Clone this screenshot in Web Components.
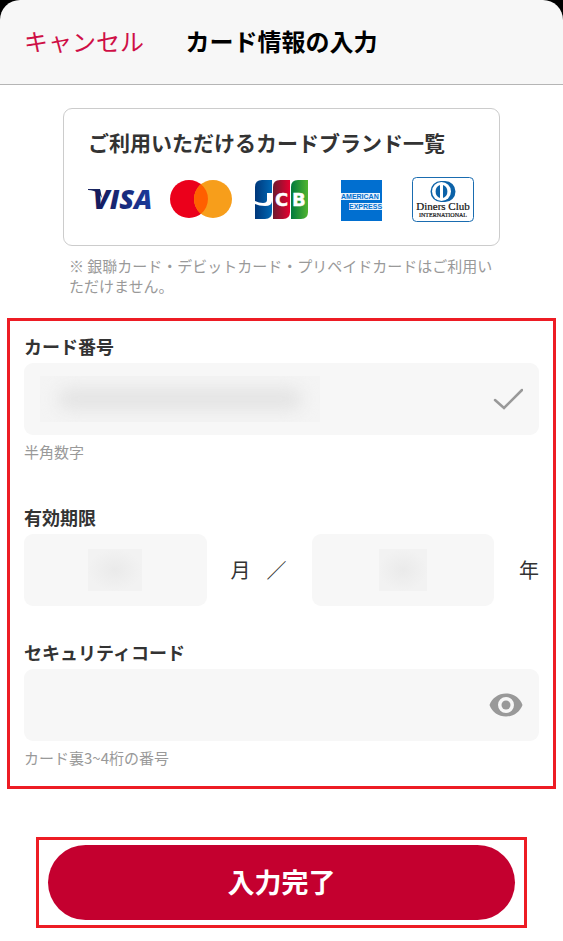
<!DOCTYPE html>
<html lang="ja">
<head>
<meta charset="utf-8">
<meta name="viewport" content="width=device-width, initial-scale=1">
<title>カード情報の入力</title>
<style>
	body {
		margin: 0;
		background: #fff;
		color: #333;
		font-family: "Noto Sans CJK JP", sans-serif;
		--accent: #c4002f;
		--frame: #ed1c24;
		--field: #f7f7f7;
		--muted: #999;
	}
</style>
</head>
<body>
<card-page></card-page>

<script>
//top bar with the cancel button and the screen title
class NavBar extends HTMLElement {
	constructor() {
		super();
		this.attachShadow({mode:'open'}).innerHTML = `
		<style>
			:host {
				display: block;
				background: #000;
			}
			header {
				display: grid;
				grid-template-columns: 1fr auto 1fr;
				align-items: center;
				height: 84px;
				padding: 0 24px 2px;
				box-sizing: border-box;
				background: var(--field);
				border-radius: 20px 20px 0 0;
			}
			.line {
				height: 1px;
				background: #b5b5b5;
			}
			button {
				justify-self: start;
				padding: 0;
				border: 0;
				background: none;
				font: 24px/36px "Noto Sans CJK JP", sans-serif;
				color: #cf0f46;
			}
			h1 {
				margin: 0;
				font-size: 24px;
				line-height: 36px;
				font-weight: bold;
				color: #000;
			}
		</style>
		<header>
			<button type="button"><slot name="action"></slot></button>
			<h1><slot></slot></h1>
		</header>
		<div class="line"></div>`;
	}
}
customElements.define('nav-bar', NavBar);

//logos of the accepted cards, by name
const LOGOS = {
	visa: `<svg width="66" height="46" viewBox="0 0 66 46" role="img" aria-label="VISA">
		<defs><linearGradient id="v" x1="0" x2="1"><stop offset="0" stop-color="#15195a"/><stop offset="1" stop-color="#1b3b9c"/></linearGradient></defs>
		<path d="M1 12h12l2 9-3-4C9 14 5 13 1 13z" fill="#192561"/>
		<text x="6" y="32" font-family="Open Sans, sans-serif" font-size="27" font-weight="800" font-style="italic" fill="url(#v)">VISA</text>
	</svg>`,
	mastercard: `<svg width="62" height="46" viewBox="0 0 62 46" role="img" aria-label="Mastercard">
		<circle cx="19" cy="22" r="19" fill="#eb001b"/>
		<circle cx="43" cy="22" r="19" fill="#f79e1b"/>
		<path d="M31 7.300a19 19 0 0 1 0 29.400a19 19 0 0 1 0-29.400z" fill="#ff5f00"/>
	</svg>`,
	jcb: `<svg width="53" height="46" viewBox="0 0 53 46" role="img" aria-label="JCB">
		<defs>
			<linearGradient id="b" x1="0" x2="1"><stop offset="0" stop-color="#00377a"/><stop offset="1" stop-color="#0068b4"/></linearGradient>
			<linearGradient id="r" x1="0" x2="1"><stop offset="0" stop-color="#6d1b30"/><stop offset="1" stop-color="#e50030"/></linearGradient>
			<linearGradient id="g" x1="0" x2="1"><stop offset="0" stop-color="#007a3c"/><stop offset="1" stop-color="#50b430"/></linearGradient>
		</defs>
		<path d="M7 3h10v32q0 7-7 7H0V10q0-7 7-7z" fill="url(#b)"/>
		<path d="M25 3h10v32q0 7-7 7H18V10q0-7 7-7z" fill="url(#r)"/>
		<path d="M43 3h10v32q0 7-7 7H36V10q0-7 7-7z" fill="url(#g)"/>
		<path d="M12 16h5v8q0 5-7 5-6 0-10-2v-3q4 2 8 2 4 0 4-3z" fill="#fff"/>
		<g font-family="DejaVu Sans, sans-serif" font-size="18" font-weight="bold" fill="#fff" stroke="#fff" stroke-width=".4">
			<text x="20" y="29">C</text>
			<text x="37" y="29">B</text>
		</g>
	</svg>`,
	amex: `<svg width="42" height="46" viewBox="0 0 42 46" role="img" aria-label="American Express">
		<path d="M0 3h41v41H0z" fill="#016fd0"/>
		<path d="M0 16h39v7H0zM8 26h33v7H8z" fill="#e6f1fb"/>
		<g font-family="Liberation Sans, sans-serif" font-size="7" font-weight="bold" fill="#016fd0">
			<text x="0" y="22">AMERICAN</text>
			<text x="8" y="32">EXPRESS</text>
		</g>
	</svg>`,
	diners: `<svg width="62" height="46" viewBox="0 0 62 46" role="img" aria-label="Diners Club International">
		<rect x=".5" y=".5" width="61" height="44" rx="4" fill="#fff" stroke="#1a6cb0"/>
		<path d="M29 4h4a10.500 10.500 0 0 1 0 21h-4a10.500 10.500 0 0 1 0-21z" fill="#0c62a8"/>
		<circle cx="29.500" cy="14.500" r="9.500" fill="#fff"/>
		<path d="M28 8a7 7 0 0 0 0 13zM31 8a7 7 0 0 1 0 13z" fill="#0c62a8"/>
		<g font-family="Liberation Serif, serif" fill="#111" stroke="#111" text-anchor="middle">
			<text x="31" y="33" font-size="11" stroke-width=".2">Diners Club</text>
			<text x="31" y="40" font-size="6" stroke-width=".2">INTERNATIONAL</text>
		</g>
	</svg>`
};

class BrandLogo extends HTMLElement {
	constructor() {
		super();
		this.attachShadow({mode:'open'});
	}

	connectedCallback() {
		this.shadowRoot.innerHTML = `
		<style>
			:host { display: block; }
			svg { display: block; }
		</style>
		${LOGOS[this.getAttribute('name')]}`;
	}
}
customElements.define('brand-logo', BrandLogo);

//bordered list of card brands, with a note under it
class BrandList extends HTMLElement {
	constructor() {
		super();
		this.attachShadow({mode:'open'}).innerHTML = `
		<style>
			:host {
				display: block;
				padding: 0 63px;
			}
			section {
				padding: 18px 16px 22px;
				border: 1px solid #ccc;
				border-radius: 9px;
			}
			h2 {
				margin: 0 8px 20px;
				font-size: 21px;
				line-height: 30px;
				font-weight: bold;
				white-space: nowrap;
			}
			.logos {
				display: grid;
				grid-template-columns: repeat(5, 1fr);
				justify-items: center;
			}
			p {
				margin: 10px 0 0;
				padding: 0 6px;
				font-size: 15px;
				line-height: 20px;
				color: var(--muted);
			}
		</style>
		<section>
			<h2><slot name="title"></slot></h2>
			<div class="logos"><slot></slot></div>
		</section>
		<p><slot name="note"></slot></p>`;
	}
}
customElements.define('brand-list', BrandList);

const ICONS = {
	check: `<svg width="34" height="34" viewBox="0 0 34 34" fill="none" stroke="#999" stroke-width="2.500" stroke-linecap="round"><path d="M6 18l9 8L33 8"/></svg>`,
	eye: `<svg width="34" height="34" viewBox="0 0 34 34"><path fill="#999" fill-rule="evenodd" d="M17 5.500C9.500 5.500 3 10 0.500 17 3 24 9.500 28.500 17 28.500S31 24 33.500 17C31 10 24.500 5.500 17 5.500zM17 25a8 8 0 1 1 0-16 8 8 0 0 1 0 16z"/><circle cx="17" cy="17" r="4.500" fill="#999"/></svg>`
};

//grey text box; "mask" is the width of the smudge that hides the value
class TextField extends HTMLElement {
	constructor() {
		super();
		this.attachShadow({mode:'open'});
	}

	connectedCallback() {
		const label = this.getAttribute('label') || '';
		const hint = this.getAttribute('hint') || '';
		const caption = this.getAttribute('caption') || '';
		const mask = this.getAttribute('mask');
		const icon = this.getAttribute('icon');
		let iconEl = '';
		if (icon === 'eye') {
			iconEl = `<button type="button" aria-label="表示">${ICONS.eye}</button>`;
		} else if (icon) {
			iconEl = `<span class="icon">${ICONS[icon]}</span>`;
		}
		this.shadowRoot.innerHTML = `
		<style>
			:host { display: block; }
			label {
				display: block;
				margin-bottom: 5px;
				font-size: 18px;
				line-height: 24px;
				font-weight: bold;
			}
			.box {
				position: relative;
				display: flex;
				align-items: center;
				height: 72px;
				padding: 0 16px;
				box-sizing: border-box;
				background: var(--field);
				border-radius: 9px;
			}
			:host([center]) .box { justify-content: center; }
			input {
				flex: 1;
				min-width: 0;
				height: 100%;
				padding: 0;
				border: 0;
				outline: 0;
				background: none;
				font: 20px "Noto Sans CJK JP", sans-serif;
				color: inherit;
			}
			:host([center]) input { text-align: center; }
			.mask {
				position: absolute;
				height: 42px;
				background: radial-gradient(closest-side, #eaeaea, #f2f2f2);
				pointer-events: none;
			}
			.mask.long {
				height: 46px;
				background: #f4f4f4;
				overflow: hidden;
			}
			.mask.long::before {
				content: "";
				display: block;
				height: 22px;
				margin: 12px 18px;
				border-radius: 11px;
				background: #e4e4e4;
				filter: blur(8px);
			}
			.icon, button {
				display: block;
				padding: 0;
				border: 0;
				background: none;
			}
			svg { display: block; }
			p {
				margin: 7px 0 0;
				font-size: 15px;
				line-height: 20px;
				color: var(--muted);
			}
		</style>
		${label && `<label for="field">${label}</label>`}
		<div class="box">
			<input id="field" type="text" inputmode="numeric" ${caption && `aria-label="${caption}"`}>
			${mask ? `<span class="mask ${mask > 100 ? 'long' : ''}" style="width:${mask}px"></span>` : ''}
			${iconEl}
		</div>
		${hint && `<p>${hint}</p>`}`;
	}
}
customElements.define('text-field', TextField);

//month and year of expiry
class ExpiryField extends HTMLElement {
	constructor() {
		super();
		this.attachShadow({mode:'open'}).innerHTML = `
		<style>
			:host { display: block; }
			fieldset {
				min-width: 0;
				margin: 0;
				padding: 0;
				border: 0;
			}
			legend {
				padding: 0;
				margin-bottom: 5px;
				font-size: 18px;
				line-height: 24px;
				font-weight: bold;
			}
			.row {
				display: flex;
				align-items: center;
				font-size: 20px;
				line-height: 30px;
			}
			text-field {
				flex: 1;
				min-width: 0;
			}
			.month { margin: 0 16px 0 24px; }
			.slash { margin-right: 25px; }
			.year { margin-left: 25px; }
		</style>
		<fieldset>
			<legend>有効期限</legend>
			<div class="row">
				<text-field caption="月" mask="54" center></text-field>
				<span class="month">月</span>
				<span class="slash">／</span>
				<text-field caption="年" mask="48" center></text-field>
				<span class="year">年</span>
			</div>
		</fieldset>`;
	}
}
customElements.define('expiry-field', ExpiryField);

class SubmitButton extends HTMLElement {
	constructor() {
		super();
		this.attachShadow({mode:'open'}).innerHTML = `
		<style>
			:host {
				display: block;
				padding: 5px 9px;
				border: 3px solid var(--frame);
			}
			button {
				display: block;
				width: 100%;
				height: 75px;
				padding: 0 0 2px;
				border: 0;
				border-radius: 38px;
				background: var(--accent);
				color: #fff;
				font: bold 27px/40px "Noto Sans CJK JP", sans-serif;
			}
		</style>
		<button type="button"><slot></slot></button>`;
	}
}
customElements.define('submit-button', SubmitButton);

class CardPage extends HTMLElement {
	constructor() {
		super();
		this.attachShadow({mode:'open'}).innerHTML = `
		<style>
			:host { display: block; }
			main { padding: 23px 0 13px; }
			form {
				margin: 22px 7px 0;
				padding: 13px 14px 18px;
				border: 3px solid var(--frame);
			}
			expiry-field { margin: 43px 0 34px; }
			submit-button { margin: 48px 36px 0; }
		</style>
		<nav-bar><span slot="action">キャンセル</span>カード情報の入力</nav-bar>
		<main>
			<brand-list>
				<span slot="title">ご利用いただけるカードブランド一覧</span>
				<brand-logo name="visa"></brand-logo>
				<brand-logo name="mastercard"></brand-logo>
				<brand-logo name="jcb"></brand-logo>
				<brand-logo name="amex"></brand-logo>
				<brand-logo name="diners"></brand-logo>
				<span slot="note">※ 銀聯カード・デビットカード・プリペイドカードはご利用いただけません。</span>
			</brand-list>
			<form>
				<text-field label="カード番号" hint="半角数字" mask="280" icon="check"></text-field>
				<expiry-field></expiry-field>
				<text-field label="セキュリティコード" hint="カード裏3~4桁の番号" icon="eye"></text-field>
			</form>
			<submit-button>入力完了</submit-button>
		</main>`;
	}
}
customElements.define('card-page', CardPage);
</script>
</body>
</html>
